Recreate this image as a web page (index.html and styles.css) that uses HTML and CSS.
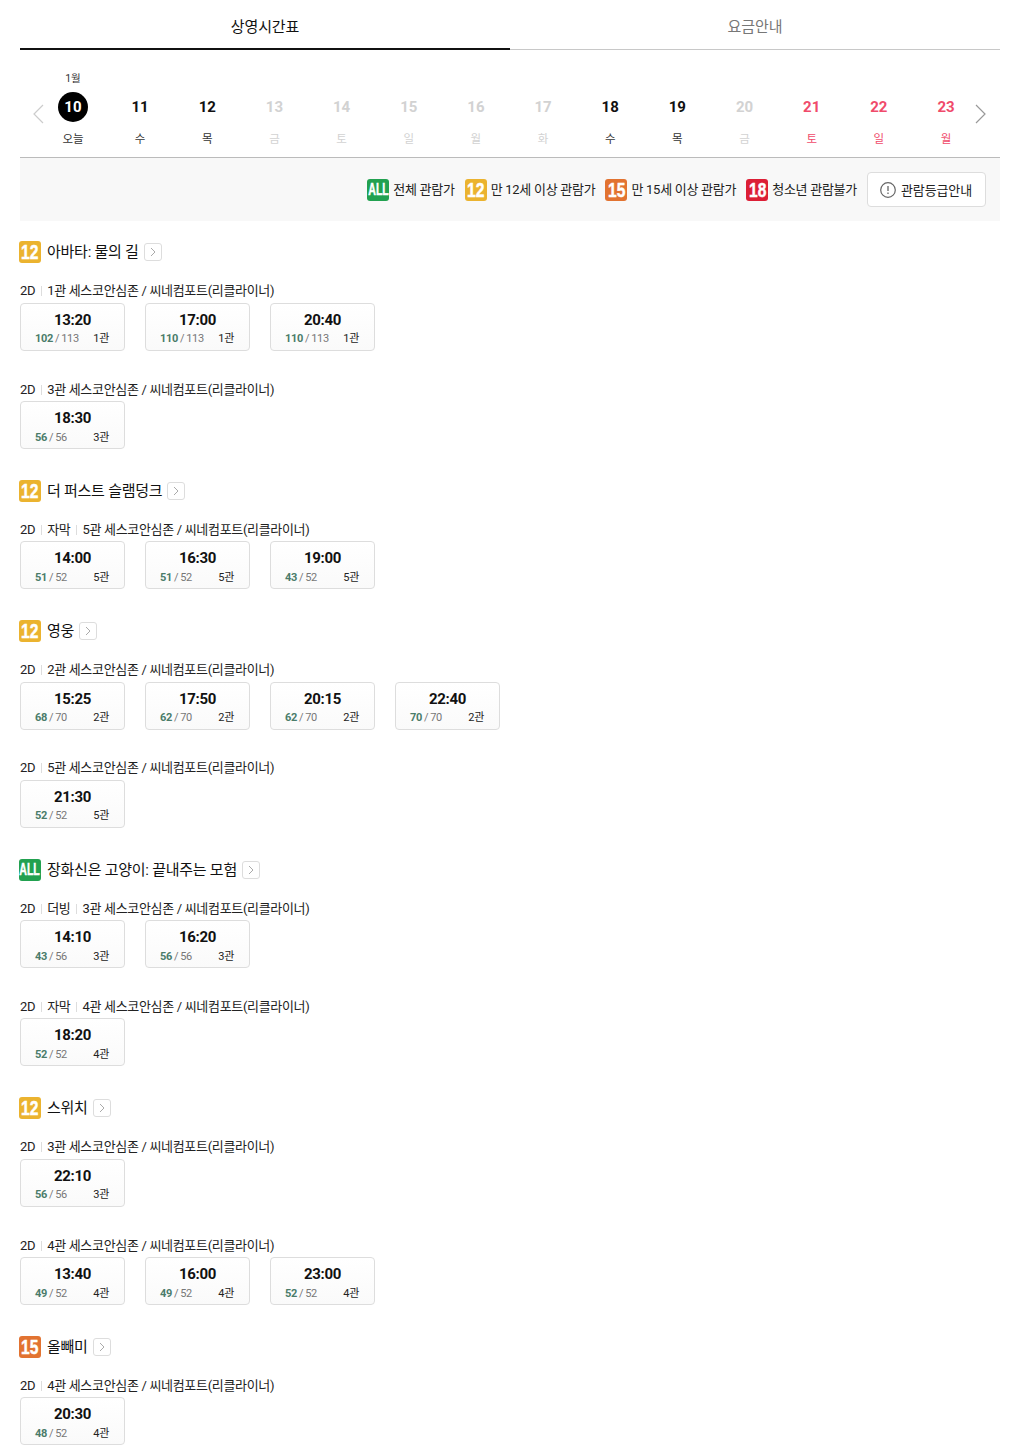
FILE: index.html
```html
<!DOCTYPE html>
<html lang="ko">
<head>
<meta charset="utf-8">
<title>상영시간표</title>
<link rel="stylesheet" href="styles.css">
</head>
<body>
<main class="page">
  <nav class="tabs">
    <a class="tab tab-on">상영시간표</a>
    <a class="tab">요금안내</a>
  </nav>

  <section class="dates">
    <svg class="arrow arrow-prev" width="12" height="20" viewBox="0 0 12 20"><path d="M11 1 2 10l9 9" fill="none" stroke="#ccc" stroke-width="1.2"/></svg>
    <div class="day"><span class="month">1월</span><span class="num today">10</span><span class="wd">오늘</span></div>
    <div class="day"><span class="month"></span><span class="num">11</span><span class="wd">수</span></div>
    <div class="day"><span class="month"></span><span class="num">12</span><span class="wd">목</span></div>
    <div class="day off"><span class="month"></span><span class="num">13</span><span class="wd">금</span></div>
    <div class="day off"><span class="month"></span><span class="num">14</span><span class="wd">토</span></div>
    <div class="day off"><span class="month"></span><span class="num">15</span><span class="wd">일</span></div>
    <div class="day off"><span class="month"></span><span class="num">16</span><span class="wd">월</span></div>
    <div class="day off"><span class="month"></span><span class="num">17</span><span class="wd">화</span></div>
    <div class="day"><span class="month"></span><span class="num">18</span><span class="wd">수</span></div>
    <div class="day"><span class="month"></span><span class="num">19</span><span class="wd">목</span></div>
    <div class="day off"><span class="month"></span><span class="num">20</span><span class="wd">금</span></div>
    <div class="day red"><span class="month"></span><span class="num">21</span><span class="wd">토</span></div>
    <div class="day red"><span class="month"></span><span class="num">22</span><span class="wd">일</span></div>
    <div class="day red"><span class="month"></span><span class="num">23</span><span class="wd">월</span></div>
    <svg class="arrow arrow-next" width="12" height="20" viewBox="0 0 12 20"><path d="M1 1l9 9-9 9" fill="none" stroke="#999" stroke-width="1.2"/></svg>
  </section>

  <section class="legend">
    <span class="lg"><i class="badge b-all"><em>ALL</em></i>전체 관람가</span>
    <span class="lg"><i class="badge b-12"><em>12</em></i>만 12세 이상 관람가</span>
    <span class="lg"><i class="badge b-15"><em>15</em></i>만 15세 이상 관람가</span>
    <span class="lg"><i class="badge b-18"><em>18</em></i>청소년 관람불가</span>
    <a class="guide"><svg width="16" height="16" viewBox="0 0 16 16"><circle cx="8" cy="8" r="7.3" fill="none" stroke="#666" stroke-width="1.2"/><path d="M8 4v5M8 10.6v1.4" stroke="#666" stroke-width="1.3"/></svg>관람등급안내</a>
  </section>

  <div class="list">
    <section class="movie">
      <h3 class="title"><i class="badge b-12"><em>12</em></i>아바타: 물의 길<a class="more"><svg width="6" height="10" viewBox="0 0 6 10"><path d="M1 1l4 4-4 4" fill="none" stroke="#aaa"/></svg></a></h3>
      <div class="group">
        <p class="info">2D<span class="sep"></span>1관 세스코안심존 / 씨네컴포트(리클라이너)</p>
        <div class="cards">
          <a class="card"><b class="time">13:20</b><span class="meta"><span class="seat"><b>102</b> / 113</span><span class="hall">1관</span></span></a>
          <a class="card"><b class="time">17:00</b><span class="meta"><span class="seat"><b>110</b> / 113</span><span class="hall">1관</span></span></a>
          <a class="card"><b class="time">20:40</b><span class="meta"><span class="seat"><b>110</b> / 113</span><span class="hall">1관</span></span></a>
        </div>
      </div>
      <div class="group">
        <p class="info">2D<span class="sep"></span>3관 세스코안심존 / 씨네컴포트(리클라이너)</p>
        <div class="cards">
          <a class="card"><b class="time">18:30</b><span class="meta"><span class="seat"><b>56</b> / 56</span><span class="hall">3관</span></span></a>
        </div>
      </div>
    </section>

    <section class="movie">
      <h3 class="title"><i class="badge b-12"><em>12</em></i>더 퍼스트 슬램덩크<a class="more"><svg width="6" height="10" viewBox="0 0 6 10"><path d="M1 1l4 4-4 4" fill="none" stroke="#aaa"/></svg></a></h3>
      <div class="group">
        <p class="info">2D<span class="sep"></span>자막<span class="sep"></span>5관 세스코안심존 / 씨네컴포트(리클라이너)</p>
        <div class="cards">
          <a class="card"><b class="time">14:00</b><span class="meta"><span class="seat"><b>51</b> / 52</span><span class="hall">5관</span></span></a>
          <a class="card"><b class="time">16:30</b><span class="meta"><span class="seat"><b>51</b> / 52</span><span class="hall">5관</span></span></a>
          <a class="card"><b class="time">19:00</b><span class="meta"><span class="seat"><b>43</b> / 52</span><span class="hall">5관</span></span></a>
        </div>
      </div>
    </section>

    <section class="movie">
      <h3 class="title"><i class="badge b-12"><em>12</em></i>영웅<a class="more"><svg width="6" height="10" viewBox="0 0 6 10"><path d="M1 1l4 4-4 4" fill="none" stroke="#aaa"/></svg></a></h3>
      <div class="group">
        <p class="info">2D<span class="sep"></span>2관 세스코안심존 / 씨네컴포트(리클라이너)</p>
        <div class="cards">
          <a class="card"><b class="time">15:25</b><span class="meta"><span class="seat"><b>68</b> / 70</span><span class="hall">2관</span></span></a>
          <a class="card"><b class="time">17:50</b><span class="meta"><span class="seat"><b>62</b> / 70</span><span class="hall">2관</span></span></a>
          <a class="card"><b class="time">20:15</b><span class="meta"><span class="seat"><b>62</b> / 70</span><span class="hall">2관</span></span></a>
          <a class="card"><b class="time">22:40</b><span class="meta"><span class="seat"><b>70</b> / 70</span><span class="hall">2관</span></span></a>
        </div>
      </div>
      <div class="group">
        <p class="info">2D<span class="sep"></span>5관 세스코안심존 / 씨네컴포트(리클라이너)</p>
        <div class="cards">
          <a class="card"><b class="time">21:30</b><span class="meta"><span class="seat"><b>52</b> / 52</span><span class="hall">5관</span></span></a>
        </div>
      </div>
    </section>

    <section class="movie">
      <h3 class="title"><i class="badge b-all"><em>ALL</em></i>장화신은 고양이: 끝내주는 모험<a class="more"><svg width="6" height="10" viewBox="0 0 6 10"><path d="M1 1l4 4-4 4" fill="none" stroke="#aaa"/></svg></a></h3>
      <div class="group">
        <p class="info">2D<span class="sep"></span>더빙<span class="sep"></span>3관 세스코안심존 / 씨네컴포트(리클라이너)</p>
        <div class="cards">
          <a class="card"><b class="time">14:10</b><span class="meta"><span class="seat"><b>43</b> / 56</span><span class="hall">3관</span></span></a>
          <a class="card"><b class="time">16:20</b><span class="meta"><span class="seat"><b>56</b> / 56</span><span class="hall">3관</span></span></a>
        </div>
      </div>
      <div class="group">
        <p class="info">2D<span class="sep"></span>자막<span class="sep"></span>4관 세스코안심존 / 씨네컴포트(리클라이너)</p>
        <div class="cards">
          <a class="card"><b class="time">18:20</b><span class="meta"><span class="seat"><b>52</b> / 52</span><span class="hall">4관</span></span></a>
        </div>
      </div>
    </section>

    <section class="movie">
      <h3 class="title"><i class="badge b-12"><em>12</em></i>스위치<a class="more"><svg width="6" height="10" viewBox="0 0 6 10"><path d="M1 1l4 4-4 4" fill="none" stroke="#aaa"/></svg></a></h3>
      <div class="group">
        <p class="info">2D<span class="sep"></span>3관 세스코안심존 / 씨네컴포트(리클라이너)</p>
        <div class="cards">
          <a class="card"><b class="time">22:10</b><span class="meta"><span class="seat"><b>56</b> / 56</span><span class="hall">3관</span></span></a>
        </div>
      </div>
      <div class="group">
        <p class="info">2D<span class="sep"></span>4관 세스코안심존 / 씨네컴포트(리클라이너)</p>
        <div class="cards">
          <a class="card"><b class="time">13:40</b><span class="meta"><span class="seat"><b>49</b> / 52</span><span class="hall">4관</span></span></a>
          <a class="card"><b class="time">16:00</b><span class="meta"><span class="seat"><b>49</b> / 52</span><span class="hall">4관</span></span></a>
          <a class="card"><b class="time">23:00</b><span class="meta"><span class="seat"><b>52</b> / 52</span><span class="hall">4관</span></span></a>
        </div>
      </div>
    </section>

    <section class="movie">
      <h3 class="title"><i class="badge b-15"><em>15</em></i>올빼미<a class="more"><svg width="6" height="10" viewBox="0 0 6 10"><path d="M1 1l4 4-4 4" fill="none" stroke="#aaa"/></svg></a></h3>
      <div class="group">
        <p class="info">2D<span class="sep"></span>4관 세스코안심존 / 씨네컴포트(리클라이너)</p>
        <div class="cards">
          <a class="card"><b class="time">20:30</b><span class="meta"><span class="seat"><b>48</b> / 52</span><span class="hall">4관</span></span></a>
        </div>
      </div>
    </section>
  </div>
</main>
</body>
</html>
```
FILE: styles.css
```css
* { box-sizing: border-box; }
html, body { margin: 0; background: #fff; }
body {
  font-family: Roboto, "Noto Sans CJK KR", sans-serif;
  color: #111;
  font-size: 13px;
}
.page { padding: 0 20px; height: 1456px; overflow: hidden; }

.tabs { display: flex; height: 50px; }
.tab {
  flex: 1;
  text-align: center;
  font-size: 15px;
  line-height: 54px;
  letter-spacing: -0.1px;
  height: 50px;
  color: #777;
  border-bottom: 1px solid #c8c8c8;
}
.tab-on { color: #111; border-bottom: 2px solid #111; }

.dates {
  position: relative;
  display: flex;
  padding: 20px 20.4px 10px 19.4px;
  border-bottom: 1px solid #bbb;
}
.arrow { position: absolute; top: 54px; }
.arrow-prev { left: 12px; }
.arrow-next { right: 13px; }
.day { flex: 1; display: flex; flex-direction: column; align-items: center; }
.month { height: 16px; line-height: 18px; font-size: 10.5px; color: #333; margin-bottom: 6px; }
.num {
  width: 30px; height: 30px;
  border-radius: 50%;
  text-align: center;
  line-height: 30px;
  font-size: 15px;
  font-weight: 700;
}
.today { background: #000; color: #fff; }
.wd { margin-top: 7px; height: 18px; line-height: 20px; font-size: 11.5px; color: #333; }
.off .num, .off .wd { color: #d2d2d2; }
.red .num { color: #f04b6b; }
.red .wd { color: #f04b6b; }

.legend {
  height: 63px;
  background: #f8f8f8;
  display: flex;
  align-items: center;
  justify-content: flex-end;
  padding-right: 14px;
  gap: 10px;
}
.lg { display: flex; align-items: center; gap: 4px; font-size: 13px; line-height: 18px; color: #222; letter-spacing: -0.27px; }
.guide {
  display: flex;
  align-items: center;
  justify-content: center;
  gap: 5px;
  width: 119px;
  height: 35px;
  padding-bottom: 1px;
  background: #fff;
  border: 1px solid #ddd;
  border-radius: 4px;
  font-size: 13px;
  color: #222;
  letter-spacing: -0.1px;
}
.guide svg { margin-left: -1px; margin-top: 1px; }
.lg .badge { margin-top: 1px; }

.badge {
  flex: none;
  display: inline-flex;
  align-items: center;
  justify-content: center;
  width: 22px;
  height: 22px;
  border-radius: 3px;
  overflow: hidden;
  color: #fff;
  font-style: normal;
}
.badge em {
  display: block;
  font-family: "Liberation Sans", sans-serif;
  font-style: normal;
  font-weight: 700;
  font-size: 21px;
  line-height: 22px;
  letter-spacing: 0;
  -webkit-text-stroke: 0.5px #fff;
  transform: scaleX(.74);
}
.b-all { background: #22a150; }
.b-all em { font-size: 16px; transform: scaleX(.66); letter-spacing: 0; }
.b-12 { background: #ebb32f; }
.b-15 { background: #e27331; }
.b-18 { background: #dc1f36; }

.list { padding-top: 17.65px; }
.movie { padding-top: 2.75px; }
.title {
  display: flex;
  align-items: center;
  height: 22px;
  margin: 0 0 17px -1px;
  font-size: 15px;
  line-height: 20px;
  font-weight: 400;
  color: #111;
  letter-spacing: -0.25px;
}
.title .badge { margin-right: 6px; }
.more {
  display: flex;
  align-items: center;
  justify-content: center;
  width: 18px;
  height: 18px;
  margin-left: 5px;
  border: 1px solid #ddd;
  border-radius: 3px;
  background: #fff;
}

.group { height: 98.4px; }
.info {
  margin: 0 0 2.5px;
  height: 20px;
  line-height: 22px;
  font-size: 13px;
  color: #222;
  letter-spacing: -0.32px;
}
.sep {
  display: inline-block;
  width: 1px;
  height: 10px;
  margin: 0 5.5px;
  background: #ddd;
  vertical-align: -1px;
}
.cards { display: flex; gap: 20px; }
.card {
  width: 105px;
  height: 48px;
  border: 1px solid #ddd;
  border-radius: 4px;
  background: linear-gradient(#fff, #fafafa);
  display: flex;
  flex-direction: column;
  align-items: center;
  padding-top: 6px;
}
.time { font-size: 15px; line-height: 20px; font-weight: 700; color: #111; letter-spacing: -0.3px; }
.meta {
  display: flex;
  justify-content: space-between;
  width: 100%;
  padding: 0 15px 0 14px;
  margin-top: 1.5px;
  font-size: 11px;
  line-height: 16px;
}
.seat { color: #777; word-spacing: -0.5px; letter-spacing: -0.3px; }
.seat b { color: #4a7c6a; font-weight: 700; }
.hall { color: #222; letter-spacing: -0.3px; }
```
